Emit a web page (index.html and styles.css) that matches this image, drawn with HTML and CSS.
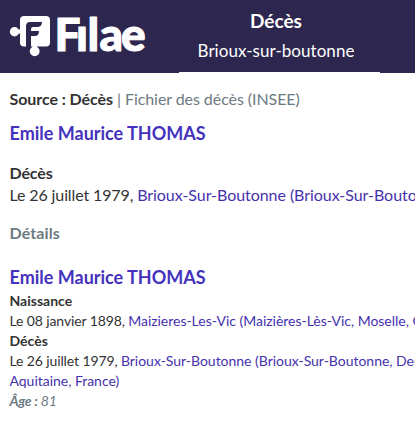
FILE: index.html
```html
<!DOCTYPE html>
<html lang="fr">
<head>
    <meta charset="UTF-8">
    <meta name="viewport" content="width=device-width, initial-scale=1.0">
    <title>Filae - Décès</title>
    <link rel="stylesheet" href="styles.css">
</head>
<body>
    <header class="header">
        <a href="#" class="logo" aria-label="Filae">
            <svg width="150" height="72" viewBox="0 0 150 72">
                <rect x="20" y="16" width="30" height="30.5" rx="4" fill="#fff"/>
                <circle cx="14.5" cy="31.7" r="4.7" fill="#fff"/>
                <path d="M15 29.5h7v4h-7z" fill="#fff"/>
                <path d="M26 47V26q0-4 4-4h12q0 5-5 5h-4q-2 0-2 2v2h8q0 5-4 5h-4v11z" fill="#2d264f"/>
                <circle cx="34.7" cy="51.3" r="4.9" fill="#fff"/>
                <path d="M32.5 43h4.5v6h-4.5z" fill="#fff"/>
                <text class="logo-text" y="51"><tspan x="54.5">F</tspan><tspan x="76">ı</tspan><tspan x="87.5">l</tspan><tspan x="99.5">a</tspan><tspan x="121">e</tspan></text>
            </svg>
        </a>
        <div class="header-title">
            <h1>Décès</h1>
            <p>Brioux-sur-boutonne</p>
        </div>
    </header>
    <main class="content">
        <p class="source"><strong>Source : Décès</strong> | Fichier des décès (INSEE)</p>
        <h2 class="name">Emile Maurice THOMAS</h2>
        <div class="event">
            <strong>Décès</strong>
            <p>Le 26 juillet 1979, <a href="#">Brioux-Sur-Boutonne (Brioux-Sur-Boutonne, Deux-Sèvres)</a></p>
        </div>
        <h3 class="details-title">Détails</h3>
        <h2 class="name">Emile Maurice THOMAS</h2>
        <div class="details">
            <strong>Naissance</strong>
            <p>Le 08 janvier 1898, <a href="#">Maizieres-Les-Vic (Maizières-Lès-Vic, Moselle, Grand Est, France)</a></p>
            <strong>Décès</strong>
            <p>Le 26 juillet 1979, <a href="#">Brioux-Sur-Boutonne (Brioux-Sur-Boutonne, Deux-Sèvres,<br>Aquitaine, France)</a></p>
            <p class="age"><strong>Âge :</strong> 81</p>
        </div>
    </main>
</body>
</html>
```

FILE: styles.css
```css
body {
    margin: 0;
    font-family: Lato, sans-serif;
    font-size: 16px;
    line-height: 22px;
    color: #333;
    background-color: #fff;
    overflow: hidden;
}
h1, h2, h3, p {
    margin: 0;
}
a {
    color: #4632ad;
    text-decoration: none;
}
strong {
    font-weight: 700;
}
.header {
    display: flex;
    height: 73px;
    background-color: #2d264f;
    color: #fff;
}
.logo {
    width: 179px;
}
.logo svg {
    display: block;
}
.logo-text {
    font-family: Lato, sans-serif;
    font-size: 46px;
    font-weight: 900;
    fill: #fff;
    stroke: #fff;
    stroke-width: 1px;
    stroke-linejoin: round;
}
.header-title {
    box-sizing: border-box;
    width: 201px;
    padding: 6px 7px 0 0;
    border-bottom: 1px solid #fff;
    text-align: center;
}
.header-title h1 {
    font-size: 19px;
    font-weight: 700;
    line-height: 30px;
}
.header-title p {
    font-size: 17px;
    line-height: 30px;
    letter-spacing: 0.05px;
}
.content {
    padding: 15px 0 0 9.5px;
    white-space: nowrap;
    overflow: hidden;
}
.source {
    color: #6c7a82;
    letter-spacing: -0.07px;
}
.source strong {
    color: #333;
}
.name {
    color: #4432bd;
    font-size: 18px;
    font-weight: 700;
    line-height: 24px;
}
.source + .name {
    margin-top: 11px;
}
.event {
    margin-top: 17px;
    letter-spacing: -0.12px;
}
.event a {
    letter-spacing: -0.05px;
}
.details-title {
    margin: 16px 0 21px;
    color: #6c7a82;
    font-size: 16px;
    font-weight: 700;
    letter-spacing: 0.1px;
}
.details {
    margin-top: 2px;
    font-size: 14px;
    line-height: 20px;
    letter-spacing: -0.12px;
}
.details a {
    letter-spacing: -0.02px;
}
.details strong {
    display: block;
    letter-spacing: 0;
}
.age {
    color: #6c7a82;
    font-style: italic;
}
.details .age strong {
    display: inline;
    letter-spacing: -0.3px;
}
```
